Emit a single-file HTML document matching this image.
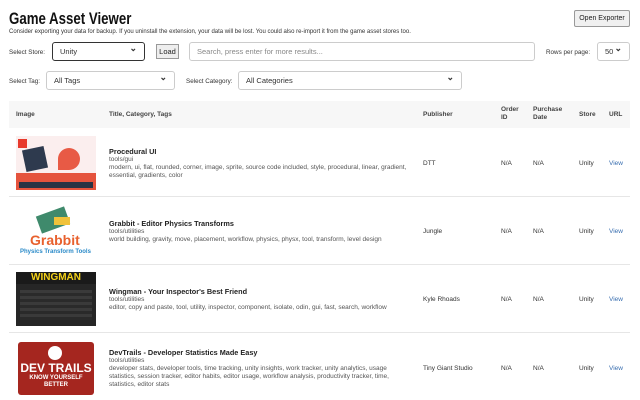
<!DOCTYPE html>
<html><head><style>
*{box-sizing:border-box;margin:0;padding:0}
body{width:640px;height:400px;overflow:hidden;background:#fff;font-family:"Liberation Sans",sans-serif;color:#222;position:relative}
.a{position:absolute}
h1{position:absolute;left:9px;top:9px;font-size:17px;font-weight:bold;color:#111;transform:scaleX(0.78);transform-origin:left top;white-space:nowrap}
.sub{left:9px;top:29px;font-size:6px;color:#333;white-space:nowrap}
.lbl{font-size:6.3px;color:#333;white-space:nowrap}
.sel{border:1px solid #ccc;border-radius:3px;background:#fff;font-size:7.5px;color:#333;padding-left:7px;display:flex;align-items:center}
.dd:after{content:"⌄";position:absolute;right:7px;top:0px;font-size:9px;font-weight:bold}
.hdr{left:9px;top:101px;width:621px;height:27px;background:#f7f7f7}
.th{font-size:6.5px;font-weight:bold;color:#444;line-height:8px}
.row{left:9px;width:621px;border-bottom:1px solid #e6e6e6}
.t{font-size:7.3px;font-weight:bold;color:#222}
.c{font-size:6.5px;color:#555;line-height:8px}
.cell{font-size:6.5px;color:#333}
.v{font-size:6.5px;color:#3a6fb0}
</style></head><body>
<h1>Game Asset Viewer</h1>
<div class="a sub">Consider exporting your data for backup. If you uninstall the extension, your data will be lost. You could also re-import it from the game asset stores too.</div>
<div class="a" style="left:574px;top:10px;width:56px;height:17px;border:1px solid #999;background:#f0f0f0;border-radius:2px;font-size:7px;display:flex;align-items:center;justify-content:center">Open Exporter</div>

<div class="a lbl" style="left:9px;top:49px">Select Store:</div>
<div class="a sel dd" style="left:52px;top:42px;width:93px;height:19px;border:1px solid #333">Unity</div>
<div class="a" style="left:156px;top:44px;width:23px;height:15px;border:1px solid #999;background:#eee;font-size:7.5px;display:flex;align-items:center;justify-content:center">Load</div>
<div class="a sel" style="left:189px;top:42px;width:346px;height:19px;color:#888">Search, press enter for more results...</div>
<div class="a lbl" style="left:546px;top:49px">Rows per page:</div>
<div class="a sel dd" style="left:597px;top:42px;width:33px;height:19px">50</div>

<div class="a lbl" style="left:9px;top:78px">Select Tag:</div>
<div class="a sel dd" style="left:46px;top:71px;width:129px;height:19px">All Tags</div>
<div class="a lbl" style="left:186px;top:78px">Select Category:</div>
<div class="a sel dd" style="left:238px;top:71px;width:224px;height:19px">All Categories</div>

<div class="a hdr"></div>
<div class="a th" style="left:16px;top:111px">Image</div>
<div class="a th" style="left:109px;top:111px">Title, Category, Tags</div>
<div class="a th" style="left:423px;top:111px">Publisher</div>
<div class="a th" style="left:501px;top:106px">Order<br>ID</div>
<div class="a th" style="left:533px;top:106px">Purchase<br>Date</div>
<div class="a th" style="left:579px;top:111px">Store</div>
<div class="a th" style="left:609px;top:111px">URL</div>

<!-- row 1 -->
<div class="a row" style="top:128px;height:69px"></div>
<div class="a" style="left:16px;top:136px;width:80px;height:54px;background:#fbeeee">
 <div class="a" style="left:2px;top:3px;width:9px;height:9px;background:#e8392c"></div>
 <div class="a" style="left:8px;top:12px;width:22px;height:22px;background:#2e3a4e;transform:rotate(-12deg)"></div>
 <div class="a" style="left:42px;top:12px;width:22px;height:22px;border-radius:50% 50% 50% 0;background:#e85a45"></div>
 <div class="a" style="left:0;top:37px;width:80px;height:17px;background:#e5533d"></div>
 <div class="a" style="left:3px;top:46px;width:74px;height:6px;background:#2a3344"></div>
</div>
<div class="a t" style="left:109px;top:147px">Procedural UI</div>
<div class="a c" style="left:109px;top:156px;width:300px">tools/gui<br>modern, ui, flat, rounded, corner, image, sprite, source code included, style, procedural, linear, gradient, essential, gradients, color</div>
<div class="a cell" style="left:423px;top:160px">DTT</div>
<div class="a cell" style="left:501px;top:160px">N/A</div>
<div class="a cell" style="left:533px;top:160px">N/A</div>
<div class="a cell" style="left:579px;top:160px">Unity</div>
<div class="a v" style="left:609px;top:160px">View</div>

<!-- row 2 -->
<div class="a row" style="top:197px;height:68px"></div>
<div class="a" style="left:16px;top:205px;width:80px;height:54px">
 <div class="a" style="left:22px;top:6px;width:30px;height:18px;background:#3f8a6c;transform:rotate(-20deg)"></div>
 <div class="a" style="left:38px;top:12px;width:16px;height:8px;background:#f0c23a"></div>
 <div class="a" style="left:14px;top:27px;font-size:14px;font-weight:bold;color:#e8612e">Grabbit</div>
 <div class="a" style="left:4px;top:44px;font-size:6px;font-weight:bold;color:#2a8ac8;white-space:nowrap">Physics Transform Tools</div>
</div>
<div class="a t" style="left:109px;top:219px">Grabbit - Editor Physics Transforms</div>
<div class="a c" style="left:109px;top:228px;width:300px">tools/utilities<br>world building, gravity, move, placement, workflow, physics, physx, tool, transform, level design</div>
<div class="a cell" style="left:423px;top:228px">Jungle</div>
<div class="a cell" style="left:501px;top:228px">N/A</div>
<div class="a cell" style="left:533px;top:228px">N/A</div>
<div class="a cell" style="left:579px;top:228px">Unity</div>
<div class="a v" style="left:609px;top:228px">View</div>

<!-- row 3 -->
<div class="a row" style="top:265px;height:68px"></div>
<div class="a" style="left:16px;top:272px;width:80px;height:54px;background:#262626">
 <div class="a" style="left:0;top:0;width:80px;height:12px;background:#1a1a1a;color:#f5d21a;font-size:10px;font-weight:bold;text-align:center;line-height:12px">WINGMAN</div>
 <div class="a" style="left:4px;top:18px;width:72px;height:30px;background:repeating-linear-gradient(#3a3a3a 0 3px,#2a2a2a 3px 6px)"></div>
</div>
<div class="a t" style="left:109px;top:287px">Wingman - Your Inspector's Best Friend</div>
<div class="a c" style="left:109px;top:296px;width:300px">tools/utilities<br>editor, copy and paste, tool, utility, inspector, component, isolate, odin, gui, fast, search, workflow</div>
<div class="a cell" style="left:423px;top:296px">Kyle Rhoads</div>
<div class="a cell" style="left:501px;top:296px">N/A</div>
<div class="a cell" style="left:533px;top:296px">N/A</div>
<div class="a cell" style="left:579px;top:296px">Unity</div>
<div class="a v" style="left:609px;top:296px">View</div>

<!-- row 4 -->
<div class="a" style="left:18px;top:342px;width:76px;height:53px;background:#a5261f;border-radius:3px">
 <div class="a" style="left:30px;top:4px;width:14px;height:14px;border-radius:50%;background:#fff"></div>
 <div class="a" style="left:0;top:19px;width:76px;text-align:center;font-size:12px;font-weight:bold;color:#fff">DEV TRAILS</div>
 <div class="a" style="left:0;top:33px;width:76px;text-align:center;font-size:6px;font-weight:bold;color:#fff;line-height:7px">KNOW YOURSELF<br>BETTER</div>
</div>
<div class="a t" style="left:109px;top:348px">DevTrails - Developer Statistics Made Easy</div>
<div class="a c" style="left:109px;top:357px;width:305px">tools/utilities<br>developer stats, developer tools, time tracking, unity insights, work tracker, unity analytics, usage statistics, session tracker, editor habits, editor usage, workflow analysis, productivity tracker, time, statistics, editor stats</div>
<div class="a cell" style="left:423px;top:365px">Tiny Giant Studio</div>
<div class="a cell" style="left:501px;top:365px">N/A</div>
<div class="a cell" style="left:533px;top:365px">N/A</div>
<div class="a cell" style="left:579px;top:365px">Unity</div>
<div class="a v" style="left:609px;top:365px">View</div>
</body></html>
